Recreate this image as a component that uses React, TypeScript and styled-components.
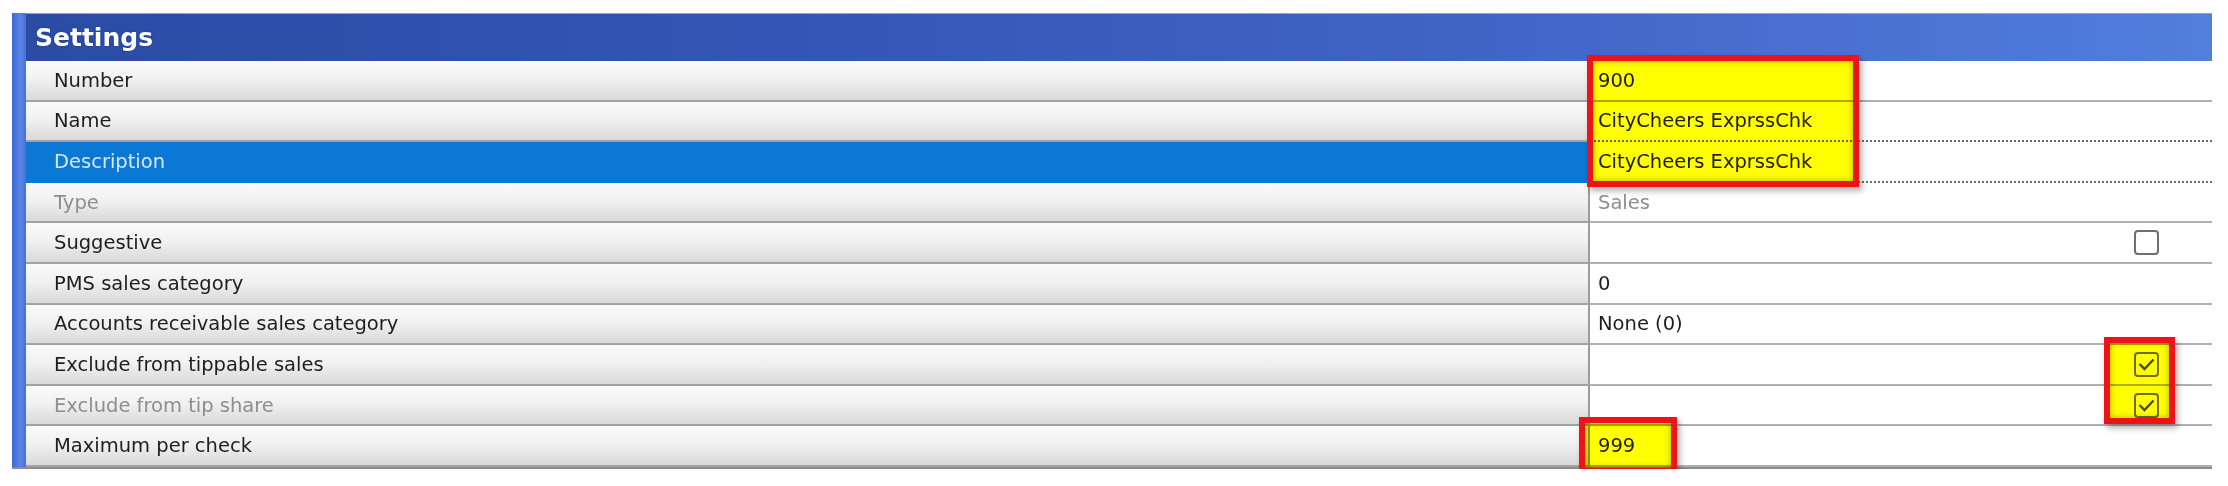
import React from "react";
import styled, { createGlobalStyle } from "styled-components";

const GlobalStyle = createGlobalStyle`
  html, body {
    margin: 0;
    padding: 0;
    background: #ffffff;
  }
`;

const Page = styled.div`
  padding: 13px 16px 0 12px;
  width: 2200px;
`;

const Panel = styled.div`
  position: relative;
  display: flex;
  border-bottom: 2px solid #8c8c8c;
`;

const EdgeStrip = styled.div`
  width: 14px;
  flex: none;
  background: linear-gradient(90deg, #3f67d2 0%, #5a84e6 60%, #4670d8 100%);
`;

const Body = styled.div`
  flex: 1;
  display: flex;
  flex-direction: column;
`;

const Header = styled.div`
  height: 47px;
  display: flex;
  align-items: center;
  padding-left: 9px;
  border-top: 1px solid #9aa4b8;
  background: linear-gradient(90deg, #2a4ca4 0%, #3356b6 35%, #4063c6 65%, #527ede 100%);
  font-family: "DejaVu Sans", "Liberation Sans", sans-serif;
  font-weight: bold;
  font-size: 25px;
  color: #ffffff;
  text-shadow: 0 0 2px #1a3a8a;
`;

const Row = styled.div`
  display: flex;
  height: 40.6px;
  font-family: "DejaVu Sans", "Liberation Sans", sans-serif;
  font-size: 19.5px;
`;

const LabelCell = styled.div<{ $selected?: boolean; $disabled?: boolean }>`
  width: 1534px;
  flex: none;
  display: flex;
  align-items: center;
  padding-left: 28px;
  border-right: 2px solid #9c9c9c;
  border-bottom: 2px solid ${(p) => (p.$selected ? "#0b78d6" : "#a2a2a2")};
  background: ${(p) =>
    p.$selected
      ? "#0b78d6"
      : "linear-gradient(180deg, #fafafa 0%, #f1f1f1 45%, #e2e2e2 80%, #d9d9d9 100%)"};
  color: ${(p) => (p.$selected ? "#d6e7fb" : p.$disabled ? "#8e8e8e" : "#1e1e1e")};
`;

const ValueCell = styled.div<{ $focused?: boolean; $disabled?: boolean }>`
  flex: 1;
  display: flex;
  align-items: center;
  justify-content: space-between;
  padding: 0 53px 0 8px;
  background: #ffffff;
  border-bottom: 2px ${(p) => (p.$focused ? "dotted #6a6a6a" : "solid #b0b0b0")};
  border-top: ${(p) => (p.$focused ? "2px dotted #6a6a6a" : "none")};
  margin-top: ${(p) => (p.$focused ? "-2px" : "0")};
  color: ${(p) => (p.$disabled ? "#8e8e8e" : "#1e1e1e")};
`;

const Box = styled.span`
  width: 25px;
  height: 25px;
  margin-left: auto;
  display: flex;
  align-items: center;
  justify-content: center;
`;

// highlighter annotation laid over the grid: yellow fill blends, red frame sits on top
const Mark = styled.div<{ $x: number; $y: number; $w: number; $h: number }>`
  position: absolute;
  left: ${(p) => p.$x}px;
  top: ${(p) => p.$y}px;
  width: ${(p) => p.$w}px;
  height: ${(p) => p.$h}px;
  box-sizing: border-box;
  border: 6px solid #ec1416;
  box-shadow: 3px 4px 6px rgba(0, 0, 0, 0.3);
  pointer-events: none;

  &::before {
    content: "";
    position: absolute;
    inset: 0;
    background: #ffff00;
    mix-blend-mode: multiply;
    box-shadow: inset 0 0 6px rgba(110, 110, 0, 0.55);
  }
`;

const CheckBox = ({ checked }: { checked: boolean }) => (
  <Box>
    <svg width="25" height="25" viewBox="0 0 25 25">
      <rect x="1" y="1" width="23" height="23" rx="3" fill="none" stroke="#6e6e6e" strokeWidth="2" />
      {checked && (
        <path d="M5.5 12 L10.5 17 L19.5 7.5" fill="none" stroke="#4a4a4a" strokeWidth="2.4" />
      )}
    </svg>
  </Box>
);

type Item = {
  label: string;
  value?: string;
  check?: boolean;
  selected?: boolean;
  disabled?: boolean;
};

const items: Item[] = [
  { label: "Number", value: "900" },
  { label: "Name", value: "CityCheers ExprssChk" },
  { label: "Description", value: "CityCheers ExprssChk", selected: true },
  { label: "Type", value: "Sales", disabled: true },
  { label: "Suggestive", check: false },
  { label: "PMS sales category", value: "0" },
  { label: "Accounts receivable sales category", value: "None (0)" },
  { label: "Exclude from tippable sales", check: true },
  { label: "Exclude from tip share", check: true, disabled: true },
  { label: "Maximum per check", value: "999" },
];

export default function App() {
  return (
    <Page>
      <GlobalStyle />
      <Panel>
        <EdgeStrip />
        <Body>
          <Header>Settings</Header>
          {items.map((it) => (
            <Row key={it.label}>
              <LabelCell $selected={it.selected} $disabled={it.disabled}>
                {it.label}
              </LabelCell>
              <ValueCell $focused={it.selected} $disabled={it.disabled}>
                {it.check === undefined ? it.value : <CheckBox checked={it.check} />}
              </ValueCell>
            </Row>
          ))}
        </Body>
        <Mark $x={1575} $y={42} $w={272} $h={132} />
        <Mark $x={2092} $y={324} $w={71} $h={87} />
        <Mark $x={1567} $y={404} $w={98} $h={57} />
      </Panel>
    </Page>
  );
}
